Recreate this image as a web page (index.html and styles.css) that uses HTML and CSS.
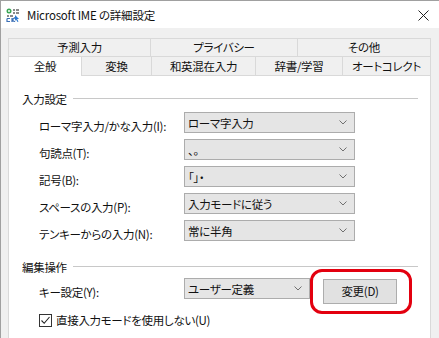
FILE: index.html
```html
<!DOCTYPE html>
<html>
<head lang="ja">
    <meta charset="UTF-8">
    <title>Microsoft IME の詳細設定</title>
    <link rel="stylesheet" href="styles.css">
</head>
<body>
<div class="window">
    <div class="titlebar">
        <svg class="app-icon" width="14" height="14" viewBox="0 0 14 14">
            <circle cx="3" cy="3" r="2.5" fill="#3aa655"/>
            <circle cx="3" cy="3" r="1" fill="#fff"/>
            <rect x="7" y="1" width="2" height="2" fill="#8a8a8a"/>
            <rect x="10" y="1" width="3" height="2" fill="#8a8a8a"/>
            <rect x="7" y="4" width="2" height="2" fill="#8a8a8a"/>
            <rect x="10" y="4" width="3" height="2" fill="#8a8a8a"/>
            <rect x="1" y="7" width="2" height="2" fill="#8a8a8a"/>
            <rect x="4" y="7" width="3" height="2" fill="#8a8a8a"/>
            <path d="M1 10.5 h3 M1 10.5 v3 h3" stroke="#3b6fb6" stroke-width="1.2" fill="none"/>
            <path d="M6 10 v4 M6 12 l3 -2.5 M6 12 l3 2" stroke="#3b6fb6" stroke-width="1.2" fill="none"/>
            <path d="M9 7 l4 4 h-2 l1.5 2.5 l-1 0.5 l-1.5 -2.5 l-1 1.5 z" fill="#2b79d0"/>
        </svg>
        <span class="title">Microsoft IME の詳細設定</span>
        <svg class="close" width="11" height="11" viewBox="0 0 11 11">
            <path d="M0.5 0.5 L10.5 10.5 M10.5 0.5 L0.5 10.5" stroke="#222" stroke-width="1"/>
        </svg>
    </div>
    <div class="body">
        <div class="tab-row back">
            <div class="tab t-yosoku">予測入力</div>
            <div class="tab t-privacy">プライバシー</div>
            <div class="tab t-sonota">その他</div>
        </div>
        <div class="tab-row front">
            <div class="tab t-zenpan selected">全般</div>
            <div class="tab t-henkan">変換</div>
            <div class="tab t-waei">和英混在入力</div>
            <div class="tab t-jisho">辞書/学習</div>
            <div class="tab t-auto">オートコレクト</div>
        </div>
        <div class="panel">
            <div class="group-head">
                <span>入力設定</span>
                <div class="rule"></div>
            </div>
            <div class="rows">
                <div class="row">
                    <span class="label">ローマ字入力/かな入力(I):</span>
                    <div class="combo"><span>ローマ字入力</span><svg class="chev" width="8" height="5" viewBox="0 0 8 5"><path d="M0.5 0.5 L4 4 L7.5 0.5" stroke="#707070" fill="none"/></svg></div>
                </div>
                <div class="row">
                    <span class="label">句読点(T):</span>
                    <div class="combo"><span>、。</span><svg class="chev" width="8" height="5" viewBox="0 0 8 5"><path d="M0.5 0.5 L4 4 L7.5 0.5" stroke="#707070" fill="none"/></svg></div>
                </div>
                <div class="row">
                    <span class="label">記号(B):</span>
                    <div class="combo"><span>「」・</span><svg class="chev" width="8" height="5" viewBox="0 0 8 5"><path d="M0.5 0.5 L4 4 L7.5 0.5" stroke="#707070" fill="none"/></svg></div>
                </div>
                <div class="row">
                    <span class="label">スペースの入力(P):</span>
                    <div class="combo"><span>入力モードに従う</span><svg class="chev" width="8" height="5" viewBox="0 0 8 5"><path d="M0.5 0.5 L4 4 L7.5 0.5" stroke="#707070" fill="none"/></svg></div>
                </div>
                <div class="row">
                    <span class="label">テンキーからの入力(N):</span>
                    <div class="combo"><span>常に半角</span><svg class="chev" width="8" height="5" viewBox="0 0 8 5"><path d="M0.5 0.5 L4 4 L7.5 0.5" stroke="#707070" fill="none"/></svg></div>
                </div>
            </div>
            <div class="group-head second">
                <span>編集操作</span>
                <div class="rule"></div>
            </div>
            <div class="rows">
                <div class="row key-row">
                    <span class="label">キー設定(Y):</span>
                    <div class="combo short"><span>ユーザー定義</span><svg class="chev" width="8" height="5" viewBox="0 0 8 5"><path d="M0.5 0.5 L4 4 L7.5 0.5" stroke="#707070" fill="none"/></svg></div>
                    <div class="btn-wrap">
                        <div class="button">変更(D)</div>
                        <div class="highlight"></div>
                    </div>
                </div>
                <div class="check-row">
                    <div class="checkbox">
                        <svg width="11" height="11" viewBox="0 0 11 11"><path d="M1.5 5.5 L4.2 8.3 L9.5 2" stroke="#222" stroke-width="1.1" fill="none"/></svg>
                    </div>
                    <span>直接入力モードを使用しない(U)</span>
                </div>
            </div>
        </div>
    </div>
</div>
</body>
</html>
```

FILE: styles.css
```css
* {
    margin: 0;
    padding: 0;
    box-sizing: border-box;
}

body {
    width: 439px;
    height: 338px;
    overflow: hidden;
    background-color: #f0f0f0;
    font-family: "Noto Sans CJK JP", sans-serif;
    font-size: 11.5px;
    letter-spacing: -0.3px;
    font-feature-settings: "palt";
    color: #111;
}

.window {
    height: 338px;
    border-top: 1px solid #a0a0a0;
    border-left: 1px solid #a0a0a0;
    background-color: #f0f0f0;
    overflow: hidden;
}

.titlebar {
    height: 27px;
    background-color: #fff;
    display: flex;
    align-items: center;
    padding-left: 5px;
}

.title {
    margin-left: 7px;
    font-size: 11.5px;
    letter-spacing: -0.2px;
    line-height: 14px;
}

.close {
    margin-left: auto;
    margin-right: 10px;
    margin-top: 2px;
}

.body {
    padding: 10px 8px 0 7px;
}

.tab-row {
    display: flex;
    border-left: 1px solid #d9d9d9;
}

.tab {
    border-top: 1px solid #d9d9d9;
    border-right: 1px solid #d9d9d9;
    text-align: center;
    background-color: #f0f0f0;
}

.back .tab {
    height: 18px;
    line-height: 17px;
}

.front .tab {
    height: 19px;
    line-height: 18px;
}

.t-yosoku { width: 142px; }
.t-privacy { width: 147px; }
.t-sonota { width: 133px; }

.t-zenpan { width: 73px; }
.t-henkan { width: 70px; }
.t-waei { width: 104px; }
.t-jisho { width: 87px; }
.t-auto { width: 88px; }

.tab.selected {
    background-color: #fff;
    height: 20px;
    margin-bottom: -1px;
    position: relative;
    z-index: 1;
}

.panel {
    height: 300px;
    background-color: #fff;
    border: 1px solid #d9d9d9;
    padding: 16px 12px 0 13px;
}

.group-head {
    display: flex;
    align-items: center;
    height: 14px;
    line-height: 14px;
}

.group-head.second {
    margin-top: 19px;
}

.rule {
    flex: 1;
    margin-left: 6px;
    margin-top: -1px;
    border-top: 1px solid #c8c8c8;
}

.rows {
    padding-left: 17px;
    margin-top: 6px;
    display: flex;
    flex-direction: column;
    gap: 6px;
}

.second + .rows {
    margin-top: 4px;
}

.row {
    display: flex;
    align-items: flex-start;
}

.label {
    width: 145px;
    line-height: 14px;
    margin-top: 7px;
}

.combo {
    width: 171px;
    height: 21px;
    background-color: #e5e5e5;
    border: 1px solid #acacac;
    display: flex;
    align-items: center;
    padding-left: 3px;
    padding-right: 7px;
    line-height: 14px;
}

.combo.short {
    width: 126px;
}

.chev {
    margin-left: auto;
}

.key-row {
    height: 26px;
}

.btn-wrap {
    position: relative;
    margin-left: 13px;
    margin-top: 1px;
}

.button {
    width: 74px;
    height: 25px;
    background-color: #e1e1e1;
    border: 1px solid #adadad;
    text-align: center;
    line-height: 23px;
}

.highlight {
    position: absolute;
    top: -10px;
    left: -13px;
    right: -15px;
    bottom: -10px;
    border: 3px solid #e3000f;
    border-radius: 12px;
}

.check-row {
    display: flex;
    align-items: center;
    margin-top: 3px;
    line-height: 14px;
}

.checkbox {
    width: 13px;
    height: 13px;
    border: 1px solid #333;
    background-color: #fff;
    margin-right: 4px;
}

.checkbox svg {
    display: block;
}
```
